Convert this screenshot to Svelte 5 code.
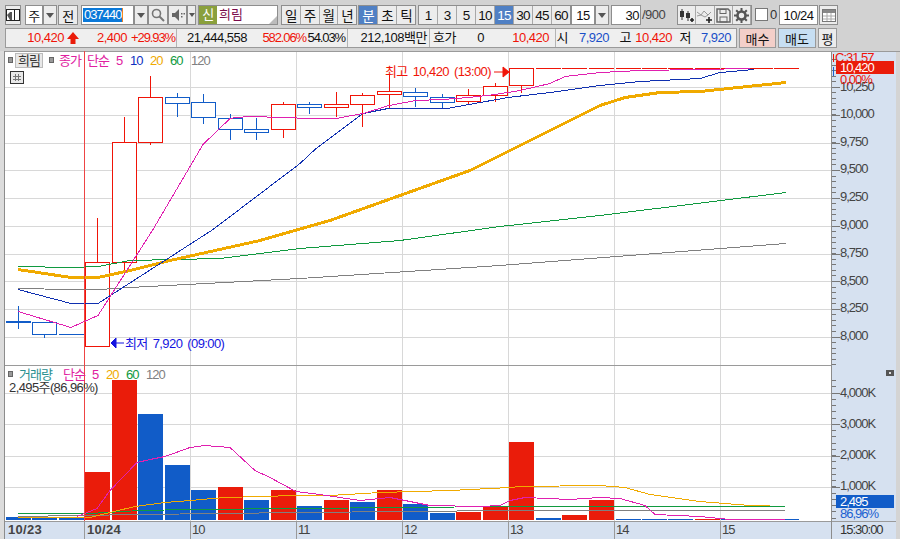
<script>
  const gridY = [87, 115, 143, 170, 198, 226, 254, 281, 309, 337];
  const gridX = [190, 296, 402, 508, 614, 720];
  const volGridY = [393, 424, 456, 487];
  const priceLabels = [
    ['10,000', 118], ['9,750', 146], ['9,500', 173], ['9,250', 201], ['9,000', 229],
    ['8,750', 257], ['8,500', 285], ['8,250', 312], ['8,000', 340]
  ];
  const volLabels = [['4,000K', 397], ['3,000K', 428], ['2,000K', 459], ['1,000K', 490]];
  const timeLabels = [['10', 192], ['11', 298], ['12', 404], ['13', 510], ['14', 616], ['15', 722]];

  // x, top, bottom, wick top, wick bottom, up?
  const candles = [
    [32, 322.5, 334.5, 322.5, 338, false],
    [85, 262, 346, 218, 346, true],
    [112, 142, 262, 117, 271, true],
    [138, 97, 142, 76, 145, true],
    [165, 97, 103.5, 93, 117, false],
    [191, 102, 117, 94, 124, false],
    [218, 118.5, 129.5, 114, 140, false],
    [244, 129.5, 132.5, 118, 140, false],
    [271, 104, 129.5, 102, 138, true],
    [297, 104.5, 107.5, 102, 114, false],
    [324, 104.5, 107.5, 92, 117, true],
    [350, 95.5, 104.5, 93, 127, true],
    [377, 91.5, 94.5, 75, 109, true],
    [403, 92.5, 96.5, 88, 107, false],
    [430, 97.5, 102.5, 94, 109, false],
    [456, 95.5, 101.5, 89, 105, true],
    [483, 86.5, 95.5, 83, 102, true],
    [509, 68.5, 85.5, 68.5, 93, true]
  ];
  const flats = [536, 562, 589, 616, 642, 668, 695, 721, 748, 774];

  const bars = [
    [6, 517, 0], [32, 518, 0], [59, 518, 0], [85, 472, 1], [112, 380, 1], [138, 414, 0],
    [165, 465, 0], [191, 490, 0], [218, 487, 1], [244, 500, 0], [271, 490, 1], [297, 506, 0],
    [324, 500, 1], [350, 502, 0], [377, 490, 1], [403, 504, 0], [430, 513, 0], [456, 512, 1],
    [483, 507, 1], [509, 442, 1], [536, 518, 0], [562, 515, 1], [589, 500, 1], [616, 519, 0],
    [642, 519, 0], [668, 519, 0], [695, 519, 1], [721, 519, 0], [748, 519, 0], [774, 519, 0]
  ];

  // half pixel offset so flat runs land on a pixel row
  const pts = (a) => a.map((p) => p[0] + ',' + (p[1] + 0.5)).join(' ');
  const ma5 = pts([[18,311],[71,327],[98,315],[153,229],[203,144],[230,118],[237,117],[250,116],[283,117],[310,118],[336,118],[363,113],[389,105],[416,100],[443,99],[469,97],[495,94],[520,90],[550,83],[565,76],[600,72],[640,70],[700,69],[750,68]]);
  const ma10 = pts([[18,289],[71,303],[98,303],[213,229],[300,163],[315,149],[363,113],[388,108],[447,108],[508,97],[550,92],[600,85],[640,81],[700,78],[720,72],[754,69]]);
  const ma20 = pts([[18,269],[71,277],[98,277],[130,270],[170,260],[260,240],[330,220],[400,195],[470,170],[530,140],[600,105],[625,97],[660,92],[700,91],[786,82]]);
  const ma60 = pts([[18,266],[71,267],[98,266],[130,260],[220,258],[300,248],[400,240],[500,226],[600,215],[786,192]]);
  const ma120 = pts([[18,288],[70,289],[100,289],[130,287],[300,278],[500,265],[786,243]]);
  const vol5 = pts([[77,516],[97,508],[110,490],[137,462],[150,459],[165,456],[190,447],[205,445],[230,447],[255,470],[270,477],[296,491],[320,494],[340,497],[360,500],[390,497],[430,505],[480,506],[500,505],[510,500],[525,497],[570,499],[600,497],[620,498],[645,505],[655,514],[700,516],[730,519],[785,519]]);
  const vol20 = pts([[18,517],[90,517],[110,512],[135,506],[165,502],[190,500],[225,497],[296,495],[330,495],[380,492],[450,490],[510,487],[520,486],[600,485],[625,487],[650,494],[700,501],[750,505],[770,505]]);
  const vol60 = pts([[18,513],[90,513],[140,510],[190,509],[300,508],[400,507],[510,506],[785,506]]);
  const vol120 = pts([[18,516],[140,514],[300,512],[510,510],[785,510]]);

  const ticks = [];
  for (let y = 59; y < 365; y += 5.55) ticks.push(Math.round(y) + 0.5);
  const volTicks = [];
  for (let y = 380; y < 520; y += 6.25) volTicks.push(Math.round(y) + 0.5);
</script>

<div class="app">
  <div class="row top">
    <button class="btn w16">
      <svg width="14" height="14" viewBox="0 0 14 14"><rect x="0.5" y="1.5" width="13" height="11" fill="#fff" stroke="#222"/><path d="M1 7l3-3h2v8H4z" fill="#555"/><rect x="8" y="2" width="1" height="10" fill="#222"/></svg>
    </button>
    <div class="field w18 ml4">주</div>
    <button class="btn w14 arrow"><i></i></button>
    <button class="btn w20 ml1">전</button>
    <div class="field code ml3"><span class="sel">037440</span></div>
    <button class="btn w14 arrow"><i></i></button>
    <button class="btn w20">
      <svg width="14" height="14" viewBox="0 0 14 14"><circle cx="5.5" cy="5.5" r="4" fill="none" stroke="#777" stroke-width="1.6"/><path d="M8.5 8.5L13 13" stroke="#777" stroke-width="2"/></svg>
    </button>
    <button class="btn w19">
      <svg width="14" height="14" viewBox="0 0 14 14"><path d="M1 5h3l4-4v12l-4-4H1z" fill="#666"/><rect x="10" y="5" width="1.5" height="1.5" fill="#666"/><rect x="10" y="8" width="1.5" height="1.5" fill="#666"/><rect x="12.5" y="5" width="1.5" height="1.5" fill="#666"/></svg>
    </button>
    <button class="btn w9 arrow small"><i></i></button>
    <div class="name ml2"><span class="badge">신</span><span class="nm">희림</span><b class="corner"></b></div>

    <div class="group g1 ml3">
      <button class="btn tab">일</button><button class="btn tab">주</button><button class="btn tab">월</button><button class="btn tab">년</button>
    </div>
    <div class="group g2 ml1">
      <button class="btn tab on">분</button><button class="btn tab">초</button><button class="btn tab">틱</button>
    </div>
    <div class="group g3 ml2">
      <button class="btn tab">1</button><button class="btn tab">3</button><button class="btn tab">5</button><button class="btn tab">10</button><button class="btn tab on">15</button><button class="btn tab">30</button><button class="btn tab">45</button><button class="btn tab">60</button>
    </div>
    <div class="field w24">15</div>
    <button class="btn w14 arrow"><i></i></button>
    <div class="field count ml2">30</div>
    <span class="total">/900</span>
    <div class="group icons ml1">
      <button class="btn ico">
        <svg width="15" height="15" viewBox="0 0 15 15"><path d="M3 1v11M9 3v10" stroke="#333"/><rect x="1" y="3" width="4" height="6" fill="#333"/><rect x="7" y="5" width="4" height="5" fill="#333"/><path d="M11 12h4M13 10v4" stroke="#222" stroke-width="1.6"/></svg>
      </button>
      <button class="btn ico">
        <svg width="15" height="15" viewBox="0 0 15 15"><path d="M0 4l4 3 3-4 4 4 3-3M0 8l4-1 4 2 3-2" fill="none" stroke="#999"/><path d="M9 12h6M12 9v6" stroke="#222" stroke-width="1.6"/></svg>
      </button>
      <button class="btn ico">
        <svg width="15" height="15" viewBox="0 0 15 15"><path d="M1 1h11l2 2v11H1z" fill="none" stroke="#666" stroke-width="1.5"/><rect x="4" y="1.5" width="6" height="4" fill="none" stroke="#666"/><rect x="4" y="9" width="7" height="5" fill="none" stroke="#666"/></svg>
      </button>
      <button class="btn ico">
        <svg width="15" height="15" viewBox="0 0 15 15"><circle cx="7.5" cy="7.5" r="4" fill="none" stroke="#555" stroke-width="2.6"/><path d="M7.5 0v3M7.5 12v3M0 7.5h3M12 7.5h3M2.2 2.2l2 2M10.8 10.8l2 2M2.2 12.8l2-2M10.8 4.2l2-2" stroke="#555" stroke-width="2"/></svg>
      </button>
    </div>
    <div class="check"></div>
    <span class="zero">0</span>
    <div class="field date">10/24</div>
    <button class="btn cal ml1">
      <svg width="14" height="13" viewBox="0 0 14 13"><rect x="0.5" y="0.5" width="13" height="12" fill="#fff" stroke="#777"/><rect x="1" y="1" width="12" height="3" fill="#888"/><path d="M1 7h12M1 10h12M5 4v8M9 4v8" stroke="#aaa"/></svg>
    </button>
  </div>

  <div class="row second">
    <div class="quote">
      <div class="seg s1">
        <span class="up" style="width:58px">10,420</span>
        <svg class="uparrow" width="14" height="14" viewBox="0 0 14 14"><path d="M7 1l6 7H9.5v5h-5V8H1z" fill="#ea1c0a"/></svg>
        <span class="up" style="width:47px">2,400</span>
        <span class="up pct" style="width:48px">+29.93%</span>
      </div>
      <div class="seg s2">
        <span style="width:70px">21,444,558</span>
        <span class="up pct" style="width:59px">582.06%</span>
        <span class="pct" style="width:39px">54.03%</span>
      </div>
      <div class="seg s3"><span style="width:79px">212,108백만</span></div>
      <div class="seg s4">
        <span style="width:26px">호가</span>
        <span style="width:28px">0</span>
        <span class="up" style="width:65px">10,420</span>
      </div>
      <div class="seg s5">
        <span style="width:12px">시</span>
        <span class="dn" style="width:41px">7,920</span>
        <span style="width:22px">고</span>
        <span class="up" style="width:41px">10,420</span>
        <span style="width:19px">저</span>
        <span class="dn" style="width:40px">7,920</span>
      </div>
    </div>
    <button class="trade buy">매수</button>
    <button class="trade sell">매도</button>
    <button class="trade flat">평</button>
  </div>

  <svg class="chart" width="900" height="488" viewBox="0 51 900 488">
    <rect x="0" y="51" width="4" height="488" fill="#dcdcdc" />
    <rect x="4" y="51" width="1" height="488" fill="#8c8c8c" />
    <rect x="5" y="51" width="827" height="470" fill="#fff" />
    <rect x="832" y="51" width="64" height="488" fill="#d6e1f0" />
    <rect x="5" y="521" width="827" height="18" fill="#d6e1f0" />
    <rect x="896" y="51" width="4" height="488" fill="#d4d4d4" />

    <g shape-rendering="crispEdges">
      {#each gridY as y}<line x1="5" x2="831" y1={y + 0.5} y2={y + 0.5} stroke="#d8d8d8" />{/each}
      {#each volGridY as y}<line x1="5" x2="831" y1={y + 0.5} y2={y + 0.5} stroke="#d8d8d8" />{/each}
      {#each gridX as x}<line x1={x + 0.5} x2={x + 0.5} y1="51" y2="521" stroke="#d8d8d8" />{/each}
      <line x1="5" x2="832" y1="365.5" y2="365.5" stroke="#9a9a9a" />
      <line x1="5" x2="896" y1="521.5" y2="521.5" stroke="#9a9a9a" />
      <line x1="831.5" x2="831.5" y1="51" y2="539" stroke="#8c8c8c" />
      <line x1="5" x2="900" y1="51.5" y2="51.5" stroke="#9a9a9a" />
      {#each [...gridX, 84] as x}<line x1={x + 0.5} x2={x + 0.5} y1="521" y2="539" stroke="#9a9a9a" />{/each}

      {#each ticks as y}<line x1="832" x2="836" y1={y} y2={y} stroke="#777" />{/each}
      {#each volTicks as y}<line x1="832" x2="836" y1={y} y2={y} stroke="#777" />{/each}
      {#each volGridY as y}<line x1="832" x2="840" y1={y + 0.5} y2={y + 0.5} stroke="#777" />{/each}
      {#each gridY as y}<line x1="832" x2="840" y1={y + 0.5} y2={y + 0.5} stroke="#777" />{/each}

      {#each bars as b}
        <rect x={b[0]} y={b[1]} width="25" height={520 - b[1]} fill={b[2] ? '#ea1c0a' : '#115cc8'} />
      {/each}

      <line x1="6" x2="31" y1="321.5" y2="321.5" stroke="#115cc8" stroke-width="2" />
      <line x1="18.5" x2="18.5" y1="306" y2="329" stroke="#115cc8" />
      <line x1="59" x2="84" y1="334.5" y2="334.5" stroke="#115cc8" />
      {#each candles as c}
        <line x1={c[0] + 12.5} x2={c[0] + 12.5} y1={c[3]} y2={c[4]} stroke={c[5] ? '#f01408' : '#115cc8'} />
        <rect x={c[0] + 0.5} y={c[1]} width="24" height={c[2] - c[1]} fill="#fff" stroke={c[5] ? '#f01408' : '#115cc8'} />
      {/each}
      {#each flats as x}<line x1={x} x2={x + 25} y1="68.5" y2="68.5" stroke="#f01408" />{/each}

      <polyline points={ma120} class="ln" stroke="#808080" />
      <polyline points={ma60} class="ln" stroke="#109a40" />
      <polyline points={ma20} class="ln" stroke="#f0aa00" stroke-width="3" />
      <polyline points={ma10} class="ln" stroke="#1030b0" />
      <polyline points={ma5} class="ln" stroke="#e020b0" />

      <polyline points={vol120} class="ln" stroke="#808080" />
      <polyline points={vol60} class="ln" stroke="#109a40" />
      <polyline points={vol20} class="ln" stroke="#f0aa00" />
      <polyline points={vol5} class="ln" stroke="#e020b0" />

      <line x1="84.5" x2="84.5" y1="51" y2="521" stroke="#ee4444" />

      <!-- legend markers -->
      <rect x="8.5" y="57.5" width="4" height="5" fill="#999" stroke="#666" />
      <rect x="49.5" y="57.5" width="4" height="5" fill="#999" stroke="#666" />
      <rect x="15.5" y="53.5" width="27" height="14" fill="#e8e8e8" stroke="#bbb" />
      <rect x="8.5" y="371.5" width="4" height="5" fill="#999" stroke="#666" />
      <rect x="10.5" y="71.5" width="13" height="12" fill="#e8e8e8" stroke="#333" />
      <path d="M13 76h8M13 79h8M15.5 74v7M18.5 74v7" stroke="#777" fill="none" />
      <rect x="886" y="370" width="8" height="6" fill="#555" />
      <rect x="889" y="372" width="2" height="2" fill="#ddd" />
      <line x1="833.5" x2="833.5" y1="54" y2="62" stroke="#f01408" />
      <line x1="833.5" x2="833.5" y1="67" y2="76" stroke="#1a60d0" />
    </g>

    <g class="t">
      <text x="18" y="65" fill="#333">희림</text>
      <text x="59" y="65" fill="#e020a0">종가</text>
      <text x="87" y="65" fill="#e020a0">단순</text>
      <text x="116" y="65" fill="#e020a0">5</text>
      <text x="130" y="65" fill="#1030c0">10</text>
      <text x="150" y="65" fill="#f0aa00">20</text>
      <text x="170" y="65" fill="#109a40">60</text>
      <text x="191" y="65" fill="#808080">120</text>

      <text x="19" y="379" fill="#2a9090">거래량</text>
      <text x="63" y="379" fill="#e020a0">단순</text>
      <text x="92" y="379" fill="#e020a0">5</text>
      <text x="106" y="379" fill="#f0aa00">20</text>
      <text x="126" y="379" fill="#109a40">60</text>
      <text x="146" y="379" fill="#808080">120</text>
      <text x="9" y="392" fill="#333" class="wide">2,495주(86,96%)</text>

      <text x="385" y="76" fill="#f01408" class="wide">최고 10,420 (13:00)</text>
      <text x="125" y="348" fill="#1414e0" class="wide">최저 7,920 (09:00)</text>

      {#each priceLabels as l}<text x="840" y={l[1]} fill="#444">{l[0]}</text>{/each}
      <text x="840" y="91" fill="#444">10,250</text>
      {#each volLabels as l}<text x="840" y={l[1]} fill="#444">{l[0]}</text>{/each}
      <text x="835" y="62" fill="#f01408">C:31.57</text>
    </g>

    <path d="M494 72h9M503 67l6 5-6 5z" fill="#f01408" stroke="#f01408" />
    <path d="M124 343h-8M116 338l-5 5 5 5z" fill="#1414e0" stroke="#1414e0" />

    <rect x="836" y="61" width="58" height="13" fill="#ea1c0a" />
    <rect x="836" y="495" width="58" height="13" fill="#115cc8" />
    <g class="t">
      <text x="840" y="72" fill="#fff">10,420</text>
      <text x="840" y="84" fill="#f01408">0,00%</text>
      <text x="840" y="506" fill="#fff">2,495</text>
      <text x="840" y="518" fill="#1a60d0">86,96%</text>
      <text x="840" y="534" fill="#333">15:30:00</text>
      {#each timeLabels as l}<text x={l[1]} y="534" fill="#444">{l[0]}</text>{/each}
      <text x="8" y="534" class="bold">10/23</text>
      <text x="87" y="534" class="bold">10/24</text>
    </g>
  </svg>
</div>

<style>
  :global(body) {
    margin: 0;
    background: #d2d2d2;
  }
  .app {
    width: 900px;
    height: 539px;
    overflow: hidden;
    background: #d2d2d2;
    font-family: "Liberation Sans", "Noto Sans CJK KR", sans-serif;
    font-size: 13px;
    letter-spacing: -0.5px;
    color: #111;
  }
  .row {
    display: flex;
    align-items: stretch;
  }
  .top {
    height: 20px;
    padding: 5px 0 0 5px;
  }
  .second {
    height: 21px;
    padding: 3px 0 0 5px;
  }
  .btn {
    box-sizing: border-box;
    display: flex;
    align-items: center;
    justify-content: center;
    margin: 0;
    padding: 0;
    height: 20px;
    background: #ececec;
    border: 1px solid #8e8e8e;
    font: inherit;
    letter-spacing: inherit;
    color: #111;
  }
  .field {
    box-sizing: border-box;
    height: 20px;
    display: flex;
    align-items: center;
    justify-content: center;
    background: #fff;
    border: 1px solid #8e8e8e;
  }
  .w9 { width: 9px; }
  .w14 { width: 14px; }
  .w16 { width: 16px; }
  .w18 { width: 18px; }
  .w19 { width: 19px; }
  .w20 { width: 20px; }
  .w24 { width: 24px; }
  .ml1 { margin-left: 1px; }
  .ml2 { margin-left: 2px; }
  .ml3 { margin-left: 3px; }
  .ml4 { margin-left: 4px; }
  .arrow i {
    width: 0;
    height: 0;
    border-left: 4px solid transparent;
    border-right: 4px solid transparent;
    border-top: 5px solid #555;
  }
  .small i {
    border-left-width: 3px;
    border-right-width: 3px;
    border-top-width: 4px;
  }
  .code {
    width: 53px;
    justify-content: flex-start;
    padding-left: 1px;
  }
  .sel {
    background: #0a78d8;
    color: #fff;
    padding: 0 1px;
    line-height: 14px;
    letter-spacing: -1px;
    border-right: 1px solid #f08020;
  }
  .name {
    box-sizing: border-box;
    position: relative;
    width: 80px;
    height: 20px;
    display: flex;
    background: #fff;
    border: 1px solid #8e8e8e;
  }
  .badge {
    width: 18px;
    background: #8aa03c;
    color: #fff;
    text-align: center;
    line-height: 18px;
  }
  .nm {
    margin-left: 2px;
    color: #7a0a4a;
    line-height: 18px;
    letter-spacing: 0;
  }
  .corner {
    position: absolute;
    right: 0;
    bottom: 0;
    border-left: 8px solid transparent;
    border-bottom: 8px solid #bbb;
  }
  .group {
    display: flex;
    border: 1px solid #8e8e8e;
    box-sizing: border-box;
    height: 20px;
  }
  .g1 { width: 76px; }
  .g2 { width: 58px; }
  .g3 { width: 153px; }
  .tab {
    flex: 1 1 0;
    min-width: 0;
    height: 18px;
    border-width: 0 1px 0 0;
    border-color: #a8a8a8;
    font-size: 13.5px;
    letter-spacing: -0.8px;
  }
  .tab:last-child {
    border-right: 0;
  }
  .on {
    background: #5080c4;
    color: #fff;
  }
  .count {
    width: 30px;
    justify-content: flex-end;
    padding-right: 1px;
  }
  .total {
    width: 35px;
    box-sizing: border-box;
    line-height: 20px;
    padding-left: 1px;
    color: #444;
  }
  .icons {
    width: 75px;
  }
  .ico {
    flex: 1 1 0;
    min-width: 0;
    height: 18px;
    border-width: 0 1px 0 0;
    border-color: #a8a8a8;
  }
  .check {
    box-sizing: border-box;
    width: 13px;
    height: 13px;
    margin: 3px 0 0 3px;
    background: #fff;
    border: 1px solid #777;
  }
  .zero {
    width: 11px;
    padding-left: 2px;
    box-sizing: border-box;
    line-height: 20px;
    color: #333;
  }
  .date {
    width: 39px;
  }
  .cal {
    width: 19px;
  }
  .quote {
    box-sizing: border-box;
    display: flex;
    width: 732px;
    height: 20px;
    background: #efefef;
    border: 1px solid #9a9a9a;
  }
  .seg {
    box-sizing: border-box;
    display: flex;
    align-items: center;
    border-right: 1px solid #b4b4b4;
    line-height: 18px;
  }
  .seg span {
    display: block;
    flex: none;
    text-align: right;
    white-space: nowrap;
  }
  .seg .pct {
    letter-spacing: -1.1px;
  }
  .s1 { width: 171px; }
  .s2 { width: 171px; }
  .s3 { width: 82px; }
  .s4 { width: 126px; }
  .s5 { width: 180px; border-right: 0; }
  .uparrow {
    margin-left: 2px;
    flex: none;
  }
  .up { color: #f01408; }
  .dn { color: #1a50c8; }
  .trade {
    box-sizing: border-box;
    width: 37px;
    height: 20px;
    margin: 0 0 0 2px;
    padding: 0;
    border: 1px solid #9a9a9a;
    font: inherit;
    letter-spacing: 0;
    color: #111;
  }
  .buy { background: #f3cfc9; }
  .sell { background: #c7dff3; width: 38px; }
  .flat { background: #ececec; width: 19px; }
  .chart {
    display: block;
    margin-top: 2px;
  }
  .ln {
    fill: none;
    stroke-linejoin: round;
  }
  .t text {
    font-family: "Liberation Sans", "Noto Sans CJK KR", sans-serif;
    font-size: 13px;
    letter-spacing: -1px;
  }
  .t .wide {
    letter-spacing: -0.6px;
    word-spacing: 2px;
  }
  .t .bold {
    font-weight: 700;
    fill: #444;
    letter-spacing: 0.3px;
  }
</style>
